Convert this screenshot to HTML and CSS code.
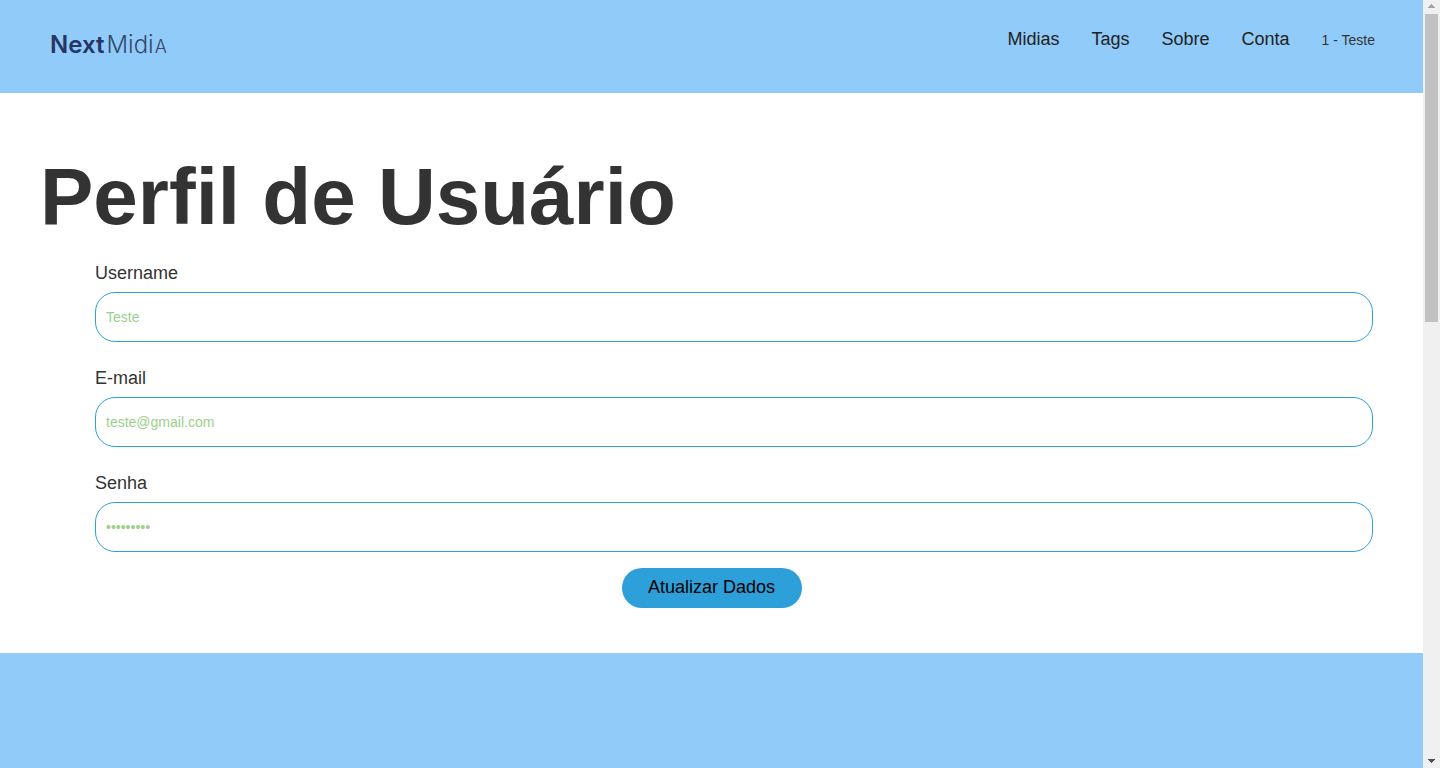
FILE: index.html
```html
<!DOCTYPE html>
<html lang="pt-BR">
<head>
<meta charset="utf-8">
<title>NextMidia - Perfil de Usuário</title>
<link rel="stylesheet" href="styles.css">
</head>
<body>
<div class="page">
  <header class="header">
    <a class="logo" href="#"><b class="logo-next">Next</b><span class="logo-midi">Midi</span><span class="logo-a">A</span></a>
    <nav class="nav">
      <a href="#">Midias</a>
      <a href="#">Tags</a>
      <a href="#">Sobre</a>
      <a href="#">Conta</a>
      <span class="user">1 - Teste</span>
    </nav>
  </header>
  <main class="profile">
    <h1>Perfil de Usuário</h1>
    <form class="form" id="profile-form">
      <div class="field">
        <label for="username">Username</label>
        <input id="username" type="text" placeholder="Teste">
      </div>
      <div class="field">
        <label for="email">E-mail</label>
        <input id="email" type="email" placeholder="teste@gmail.com">
      </div>
      <div class="field">
        <label for="senha">Senha</label>
        <input id="senha" type="password" placeholder="•••••••••">
      </div>
    </form>
    <button class="submit" type="submit" form="profile-form">Atualizar Dados</button>
  </main>
  <footer class="footer"></footer>
</div>
<div class="scrollbar" aria-hidden="true">
  <svg class="arrow arrow-up" viewBox="0 0 7 4" shape-rendering="crispEdges"><path d="M3 0h1v1h1v1h1v1h1v1H0V3h1V2h1V1h1z"/></svg>
  <div class="track"><div class="thumb"></div></div>
  <svg class="arrow" viewBox="0 0 7 4" shape-rendering="crispEdges"><path d="M0 0h7v1H6v1H5v1H4v1H3V3H2V2H1V1H0z"/></svg>
</div>
</body>
</html>
```
FILE: styles.css
```css
* {
  box-sizing: border-box;
}

body {
  display: flex;
  height: 100vh;
  margin: 0;
  overflow: hidden;
  background: #fff;
  color: #333;
  font: 18px/20px "Liberation Sans", Arial, sans-serif;
}

.page {
  display: flex;
  flex: 1;
  flex-direction: column;
}

.header {
  display: flex;
  justify-content: space-between;
  align-items: flex-start;
  padding: 29px 48px 34px 50px;
  background: #91cbfa;
}

.logo {
  display: flex;
  align-items: baseline;
  padding-top: 4px;
  color: #263566;
  font: 24px/24px Inter, sans-serif;
  text-decoration: none;
}

.logo-next {
  margin-right: 2px;
  font-weight: 600;
}

.logo-midi {
  margin-right: 1px;
  color: #34496b;
  font-weight: 300;
}

.logo-a {
  color: #34496b;
  font-size: 18px;
  font-weight: 300;
}

.nav {
  display: flex;
  align-items: baseline;
  gap: 32px;
}

.nav a {
  color: #222;
  text-decoration: none;
}

.user {
  font-size: 14px;
}

.profile {
  display: flex;
  flex-direction: column;
  padding: 58px 50px 45px 40px;
}

h1 {
  margin: 0;
  font-size: 80px;
  line-height: 92px;
  font-variant-ligatures: none;
}

.form {
  display: flex;
  flex-direction: column;
  gap: 26px;
  margin: 20px 0 16px 55px;
}

.field {
  display: flex;
  flex-direction: column;
  gap: 9px;
}

.field input {
  width: 100%;
  height: 50px;
  padding: 0 10px;
  border: 1px solid #2d9fd9;
  border-radius: 20px;
  background: #fff;
  font: 14px/20px "Liberation Sans", Arial, sans-serif;
}

.field input::placeholder {
  color: #9ad08b;
  opacity: 1;
}

.submit {
  align-self: center;
  width: 180px;
  height: 40px;
  margin-left: 10px;
  padding: 0 0 2px;
  border: 0;
  border-radius: 20px;
  background: #2d9fd9;
  color: #000;
  font: inherit;
}

.footer {
  flex: 1;
  background: #91cbfa;
}

.scrollbar {
  display: flex;
  flex-direction: column;
  align-items: center;
  width: 17px;
  padding: 4px 0 5px;
  background: #f0f0f0;
}

.arrow {
  width: 7px;
  height: 4px;
  fill: #505050;
}

.arrow-up {
  fill: #a3a3a3;
}

.track {
  flex: 1;
  padding: 6px 0 12px;
}

.thumb {
  width: 13px;
  height: 42%;
  background: #c1c1c1;
}
```
